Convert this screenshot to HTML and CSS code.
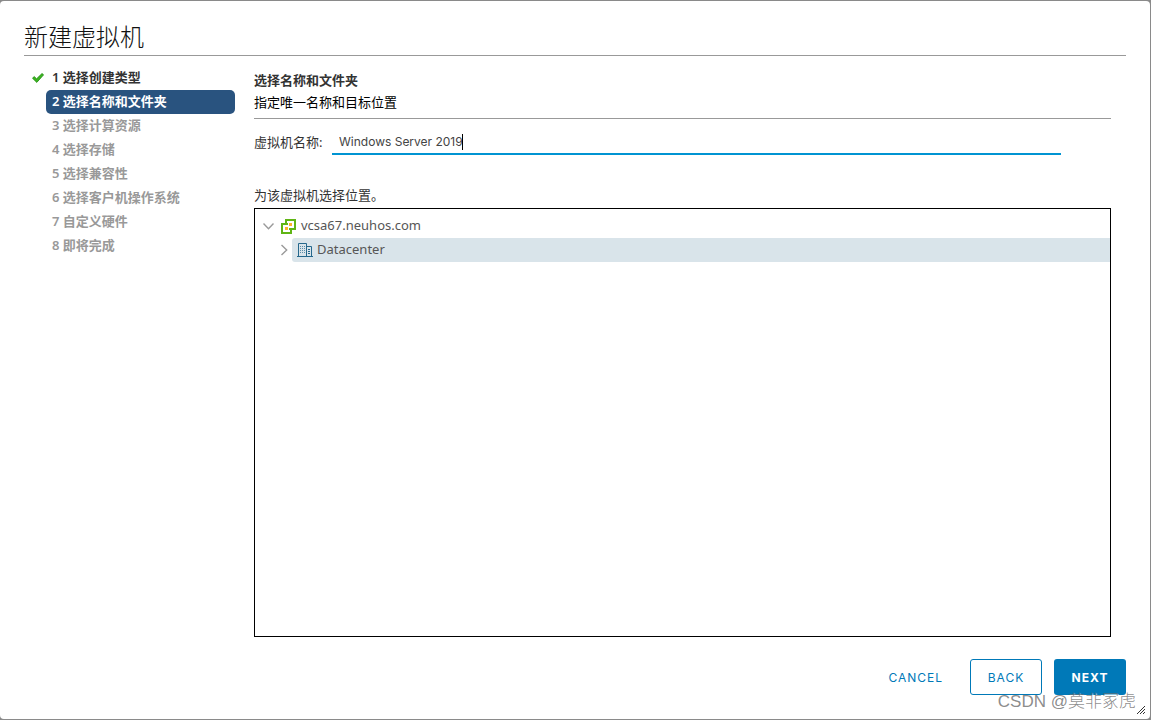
FILE: index.html
```html
<!DOCTYPE html>
<html lang="zh-CN">
<head>
  <meta charset="UTF-8">
  <meta name="viewport" content="width=device-width, initial-scale=1">
  <title>新建虚拟机</title>
  <link rel="stylesheet" href="styles.css">
</head>
<body>

<div class="wizard" role="dialog" aria-labelledby="wizardTitle">
  <header class="wizard-header">
    <h1 id="wizardTitle">新建虚拟机</h1>
  </header>

  <div class="wizard-body">
    <nav class="steps">
      <ol>
        <li class="step done">
          <svg class="check" viewBox="0 0 12 10" width="12" height="10" aria-hidden="true">
            <path d="M0.5 5.2 L2.2 3.6 L4.6 5.8 L10 0.5 L11.6 1.8 L4.8 9.4 Z" fill="#3cb521" stroke="#1d8a0c" stroke-width="0.8"/>
          </svg>
          <span>1 选择创建类型</span>
        </li>
        <li class="step active" aria-current="step"><span>2 选择名称和文件夹</span></li>
        <li class="step"><span>3 选择计算资源</span></li>
        <li class="step"><span>4 选择存储</span></li>
        <li class="step"><span>5 选择兼容性</span></li>
        <li class="step"><span>6 选择客户机操作系统</span></li>
        <li class="step"><span>7 自定义硬件</span></li>
        <li class="step"><span>8 即将完成</span></li>
      </ol>
    </nav>

    <main class="content">
      <div class="content-header">
        <h2>选择名称和文件夹</h2>
        <p>指定唯一名称和目标位置</p>
      </div>

      <div class="name-row">
        <label for="vmName">虚拟机名称:</label>
        <div class="name-field">
          <input type="text" id="vmName" value="Windows Server 2019" spellcheck="false">
          <span class="caret"></span>
        </div>
      </div>

      <p class="location-label">为该虚拟机选择位置。</p>

      <div class="tree" role="tree">
        <div class="tree-node" role="treeitem" aria-expanded="true">
          <svg class="arrow" viewBox="0 0 12 12" width="12" height="12" aria-hidden="true">
            <path d="M0.5 3.5 L5.5 8.7 L10.5 3.5" fill="none" stroke="#9a9a9a" stroke-width="1.4"/>
          </svg>
          <div class="tree-label">
            <svg viewBox="0 0 16 16" width="16" height="16" aria-hidden="true">
              <path d="M5 2 H14 V11 H10 V15 H1 V6 H5 Z" fill="#fff" stroke="#60b515" stroke-width="2"/>
              <path d="M5 6 H7 M10 11 H8" fill="none" stroke="#60b515" stroke-width="2"/>
              <rect x="8" y="5" width="3" height="3" fill="#fdb32b"/>
              <rect x="4" y="9" width="3" height="3" fill="#fdb32b"/>
            </svg>
            <span>vcsa67.neuhos.com</span>
          </div>
        </div>
        <div class="tree-node child" role="treeitem" aria-expanded="false" aria-selected="true">
          <svg class="arrow" viewBox="0 0 12 12" width="12" height="12" aria-hidden="true">
            <path d="M3.5 1 L8.7 6 L3.5 11" fill="none" stroke="#9a9a9a" stroke-width="1.4"/>
          </svg>
          <div class="tree-label selected">
            <svg viewBox="0 0 16 16" width="16" height="16" aria-hidden="true">
              <path d="M1.5 14 V1.5 H9.5 V14 M9.5 4.5 H14.5 V14 M0 14.5 H16" fill="none" stroke="#25688c" stroke-width="1"/>
              <path d="M3.5 4 V12 M5.5 4 V12 M7.5 4 V12" fill="none" stroke="#25688c" stroke-width="1" stroke-dasharray="1 1" opacity="0.7"/>
              <path d="M11 7.5 H13 M11 9.5 H13 M11 11.5 H13" stroke="#25688c" stroke-width="1"/>
            </svg>
            <span>Datacenter</span>
          </div>
        </div>
      </div>
    </main>
  </div>

  <footer class="wizard-footer">
    <button type="button" class="btn btn-link">CANCEL</button>
    <button type="button" class="btn btn-outline">BACK</button>
    <button type="button" class="btn btn-primary">NEXT</button>
  </footer>

  <div class="watermark">CSDN @莫非冢虎</div>
  <svg class="resize-grip" viewBox="0 0 8 8" width="8" height="8" aria-hidden="true">
    <path d="M0 8 L8 0 M3 8 L8 3 M6 8 L8 6" stroke="#333" stroke-width="1"/>
  </svg>
</div>

</body>
</html>
```

FILE: styles.css
```css
* {
  box-sizing: border-box;
}

body {
  margin: 0;
  min-height: 100vh;
  display: flex;
  padding: 1px 1px 1px 0;
  background: #8a8a8a;
  font-family: "Noto Sans", "Noto Sans CJK SC", sans-serif;
  font-size: 13px;
  line-height: 24px;
  color: #333;
}

h1, h2, p, ol {
  margin: 0;
  padding: 0;
}

.wizard {
  position: relative;
  flex: 1;
  display: flex;
  flex-direction: column;
  padding: 18px 24px 24px;
  background: #fff;
  border-radius: 4px;
}

.wizard-header {
  border-bottom: 1px solid #999;
}

.wizard-header h1 {
  font-size: 24px;
  font-weight: 300;
  line-height: 36px;
  color: #111;
}

.wizard-body {
  flex: 1;
  display: flex;
  gap: 19px;
}

/* steps */

.steps {
  width: 211px;
  padding-top: 10px;
}

.steps ol {
  list-style: none;
}

.step {
  position: relative;
  height: 24px;
  margin-left: 22px;
  padding-left: 6px;
  border-radius: 5px;
  font-weight: 600;
  line-height: 22px;
  color: #999;
  white-space: nowrap;
}

.step.done {
  color: #333;
}

.step.active {
  background: #29537f;
  color: #fff;
}

.check {
  position: absolute;
  left: -14px;
  top: 7px;
}

/* content */

.content {
  flex: 1;
  display: flex;
  flex-direction: column;
  margin-right: 15px;
}

.content-header {
  padding: 13px 0 5px;
  border-bottom: 1px solid #999;
  line-height: 22px;
}

.content-header h2 {
  font-size: 13px;
  font-weight: 600;
}

.content-header p {
  color: #000;
}

.name-row {
  display: flex;
  gap: 10px;
  margin: 12px 50px 28px 0;
}

.name-row label {
  width: 68px;
  line-height: 22px;
  white-space: nowrap;
}

.name-field {
  position: relative;
  flex: 1;
}

.name-field input {
  display: block;
  width: 100%;
  height: 24px;
  padding: 0 7px 2px;
  border: none;
  border-bottom: 2px solid #0094d2;
  outline: none;
  background: none;
  font-family: Inter, sans-serif;
  font-size: 12px;
  color: #444;
}

.caret {
  position: absolute;
  left: 130px;
  top: 3px;
  width: 1px;
  height: 16px;
  background: #000;
}

.location-label {
  margin-bottom: 1px;
}

.tree {
  flex: 1;
  padding: 5px 0;
  border: 1px solid #000;
  color: #565656;
}

.tree-node {
  display: flex;
  align-items: center;
  gap: 2px;
  height: 24px;
  padding-left: 8px;
}

.tree-node.child {
  padding-left: 23px;
}

.tree-label {
  flex: 1;
  display: flex;
  align-items: center;
  gap: 4px;
  height: 24px;
  padding-left: 4px;
}

.tree-label span {
  line-height: 22px;
  padding-bottom: 2px;
}

.tree-label.selected {
  padding-left: 5px;
  background: #d9e4ea;
  border-radius: 3px 0 0 3px;
}

/* footer */

.wizard-footer {
  display: flex;
  justify-content: flex-end;
  gap: 12px;
  margin-top: 22px;
}

.btn {
  min-width: 72px;
  height: 36px;
  padding: 0 14px;
  border: 1px solid transparent;
  border-radius: 3px;
  background: none;
  font-family: Inter, sans-serif;
  font-size: 12px;
  font-weight: 400;
  letter-spacing: 1px;
  color: #0079b8;
  cursor: pointer;
}

.btn-outline {
  border-color: #0079b8;
}

.btn-primary {
  background: #0079b8;
  font-weight: 700;
  color: #fff;
}

.watermark {
  position: absolute;
  right: 14px;
  bottom: 5px;
  font-family: "Liberation Sans", "Noto Sans CJK SC", sans-serif;
  font-size: 17px;
  font-weight: 300;
  color: rgba(110, 110, 110, 0.8);
  text-shadow: 1px 1px 0 rgba(255, 255, 255, 0.7);
  pointer-events: none;
}

.resize-grip {
  position: absolute;
  right: 5px;
  bottom: 5px;
}
```
